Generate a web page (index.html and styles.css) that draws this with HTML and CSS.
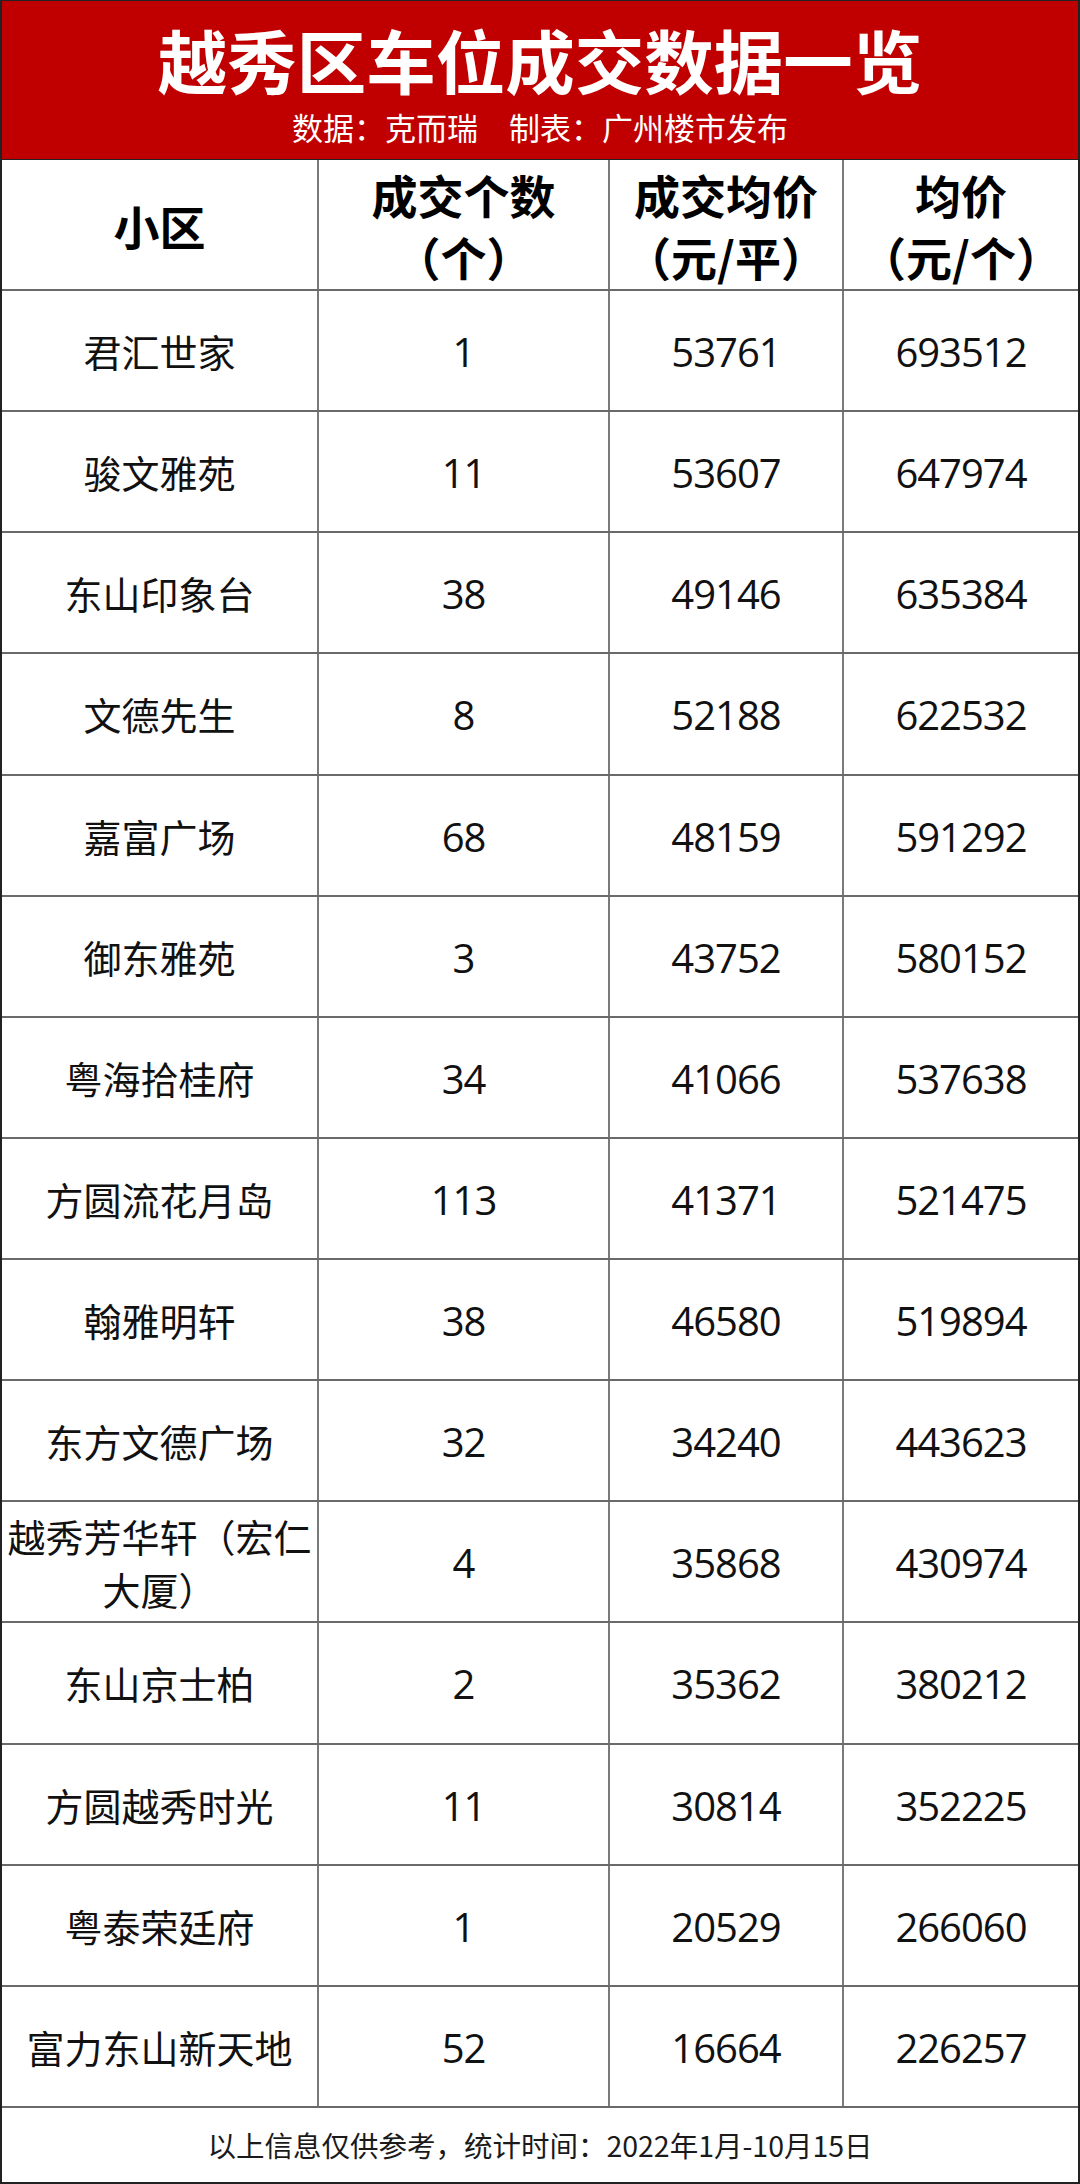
FILE: index.html
```html
<!DOCTYPE html>
<html lang="zh-CN">
<head>
<meta charset="utf-8">
<title>越秀区车位成交数据一览</title>
<link rel="stylesheet" href="styles.css">
</head>
<body>
<div class="sheet">
  <header class="banner">
    <h1 class="title">越秀区车位成交数据一览</h1>
    <p class="subtitle">数据：克而瑞　制表：广州楼市发布</p>
  </header>
  <div class="table">
    <div class="row head">
      <div class="cell">小区</div>
      <div class="cell">成交个数<br>（个）</div>
      <div class="cell">成交均价<br>（元/平）</div>
      <div class="cell">均价<br>（元/个）</div>
    </div>
    <div class="row"><div class="cell name">君汇世家</div><div class="cell num">1</div><div class="cell num">53761</div><div class="cell num">693512</div></div>
    <div class="row"><div class="cell name">骏文雅苑</div><div class="cell num">11</div><div class="cell num">53607</div><div class="cell num">647974</div></div>
    <div class="row"><div class="cell name">东山印象台</div><div class="cell num">38</div><div class="cell num">49146</div><div class="cell num">635384</div></div>
    <div class="row"><div class="cell name">文德先生</div><div class="cell num">8</div><div class="cell num">52188</div><div class="cell num">622532</div></div>
    <div class="row"><div class="cell name">嘉富广场</div><div class="cell num">68</div><div class="cell num">48159</div><div class="cell num">591292</div></div>
    <div class="row"><div class="cell name">御东雅苑</div><div class="cell num">3</div><div class="cell num">43752</div><div class="cell num">580152</div></div>
    <div class="row"><div class="cell name">粤海拾桂府</div><div class="cell num">34</div><div class="cell num">41066</div><div class="cell num">537638</div></div>
    <div class="row"><div class="cell name">方圆流花月岛</div><div class="cell num">113</div><div class="cell num">41371</div><div class="cell num">521475</div></div>
    <div class="row"><div class="cell name">翰雅明轩</div><div class="cell num">38</div><div class="cell num">46580</div><div class="cell num">519894</div></div>
    <div class="row"><div class="cell name">东方文德广场</div><div class="cell num">32</div><div class="cell num">34240</div><div class="cell num">443623</div></div>
    <div class="row"><div class="cell name">越秀芳华轩（宏仁大厦）</div><div class="cell num">4</div><div class="cell num">35868</div><div class="cell num">430974</div></div>
    <div class="row"><div class="cell name">东山京士柏</div><div class="cell num">2</div><div class="cell num">35362</div><div class="cell num">380212</div></div>
    <div class="row"><div class="cell name">方圆越秀时光</div><div class="cell num">11</div><div class="cell num">30814</div><div class="cell num">352225</div></div>
    <div class="row"><div class="cell name">粤泰荣廷府</div><div class="cell num">1</div><div class="cell num">20529</div><div class="cell num">266060</div></div>
    <div class="row"><div class="cell name">富力东山新天地</div><div class="cell num">52</div><div class="cell num">16664</div><div class="cell num">226257</div></div>
  </div>
  <footer class="note">以上信息仅供参考，统计时间：2022年1月-10月15日</footer>
</div>
</body>
</html>
```

FILE: styles.css
```css
html, body {
  margin: 0;
  padding: 0;
  background: #ffffff;
}

body {
  font-family: "Open Sans", "Noto Sans CJK SC", sans-serif;
  color: #111111;
}

.sheet {
  width: 1080px;
  height: 2184px;
  box-sizing: border-box;
  border-left: 2px solid #222222;
  border-right: 2px solid #222222;
  display: flex;
  flex-direction: column;
}

.banner {
  height: 160px;
  box-sizing: border-box;
  background: #c00000;
  border-top: 1px solid #222222;
  border-bottom: 1px solid #222222;
  color: #ffffff;
  text-align: center;
  padding-top: 18px;
}

.title {
  margin: 0;
  font-family: "Noto Sans CJK SC", sans-serif;
  font-weight: 700;
  font-size: 69.5px;
  line-height: 80px;
  letter-spacing: 0;
}

.subtitle {
  margin: 8px 0 0 0;
  font-family: "Noto Sans CJK SC", sans-serif;
  font-weight: 400;
  font-size: 31px;
  line-height: 40px;
}

.table {
  display: flex;
  flex-direction: column;
}

.row {
  display: grid;
  grid-template-columns: 317px 291px 234px 1fr;
  height: 121.133px;
  box-sizing: border-box;
  border-bottom: 2px solid #6a6a6a;
}

.row.head {
  height: 131px;
}

.cell {
  display: flex;
  align-items: center;
  justify-content: center;
  text-align: center;
  border-right: 2px solid #7a7a7a;
  box-sizing: border-box;
}

.cell:last-child {
  border-right: none;
}

.row.head .cell {
  font-family: "Noto Sans CJK SC", sans-serif;
  font-weight: 700;
  font-size: 46px;
  line-height: 62px;
  color: #000000;
}

.cell.name {
  font-family: "Noto Sans CJK SC", sans-serif;
  font-size: 38px;
  line-height: 53px;
  padding: 0 2px;
}

.cell.num {
  font-family: "Open Sans", "Noto Sans", sans-serif;
  font-size: 40px;
  letter-spacing: -1px;
  padding-top: 2px;
}

.note {
  flex: 1;
  display: flex;
  align-items: center;
  justify-content: center;
  box-sizing: border-box;
  border-bottom: 2px solid #222222;
  font-family: "Noto Sans CJK SC", sans-serif;
  font-size: 28.5px;
  color: #1a1a1a;
}
```
